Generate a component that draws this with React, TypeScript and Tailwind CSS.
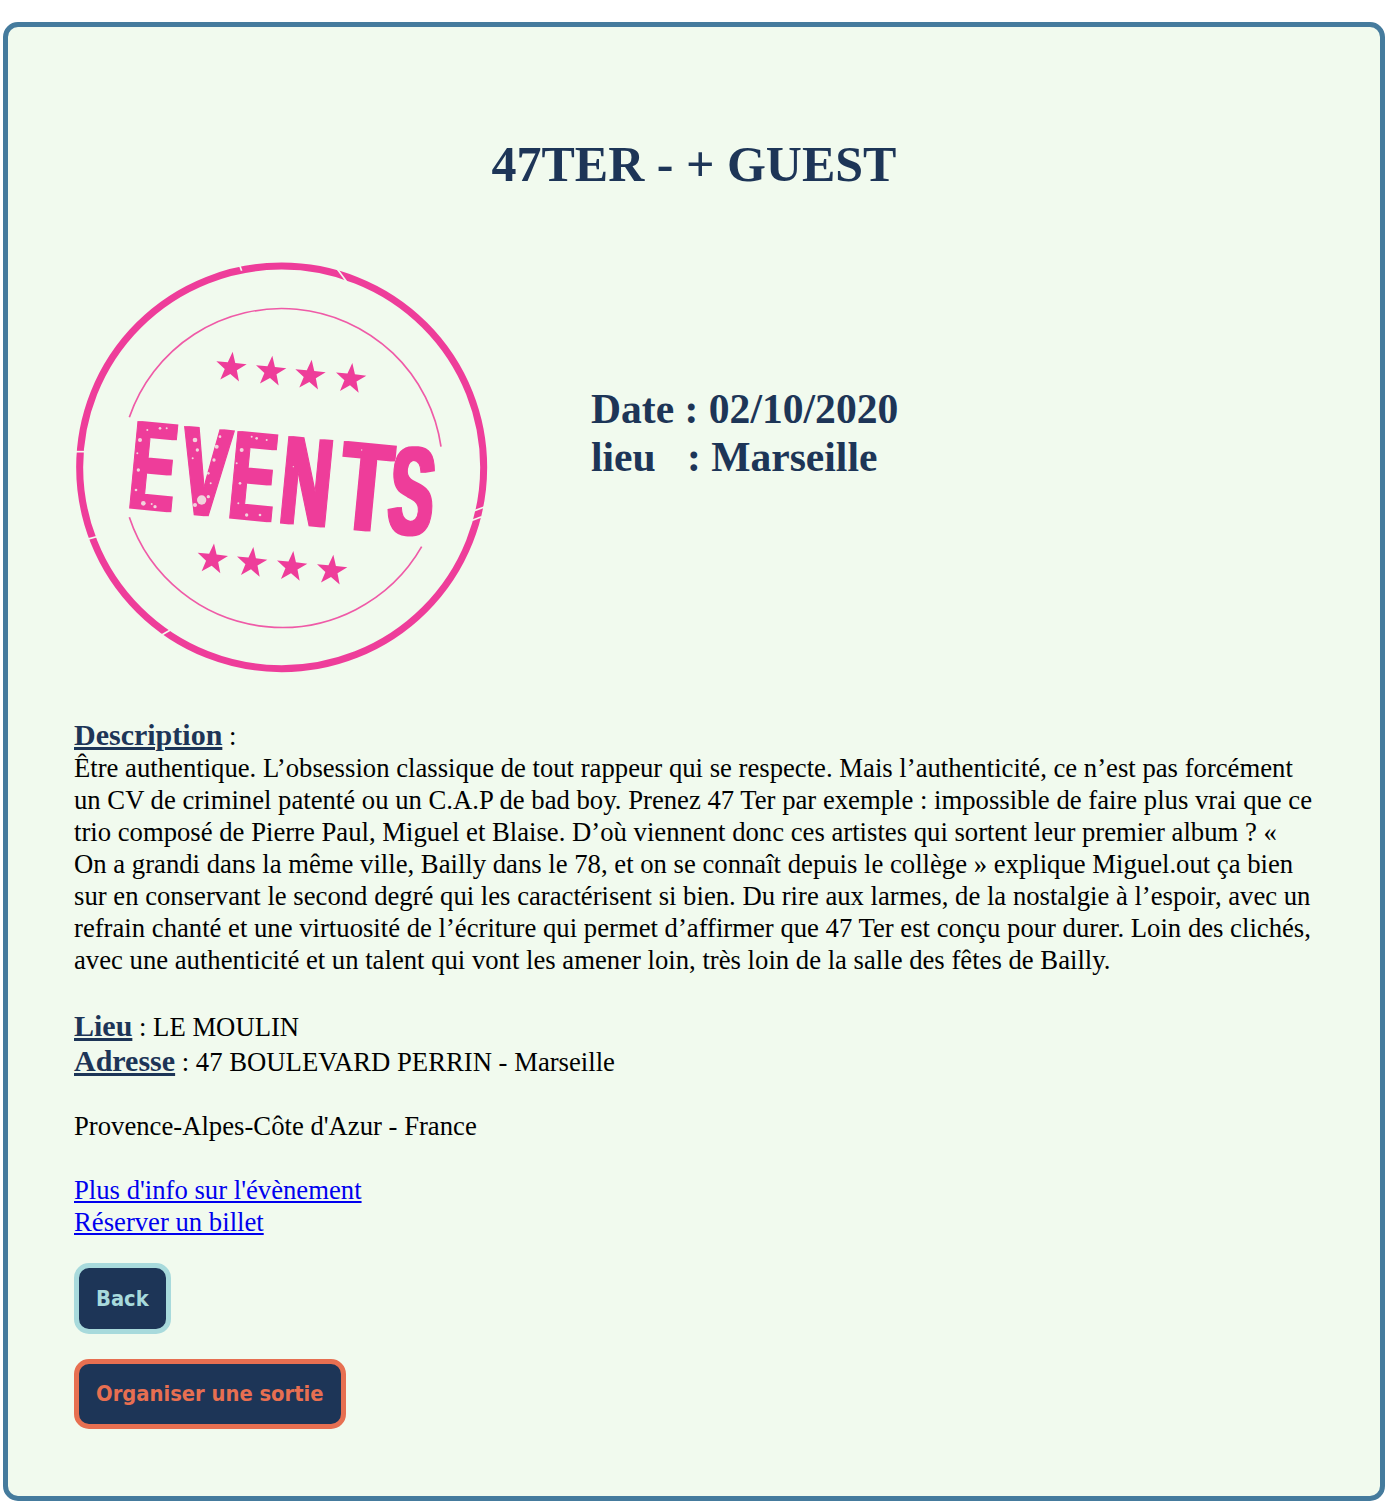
const PINK = "#ee3d9a";
const BG = "#f1faee";

function star(cx: number, cy: number, r: number, rot = 6) {
  const pts: string[] = [];
  for (let i = 0; i < 10; i++) {
    const rad = i % 2 === 0 ? r : r * 0.4;
    const a = ((-90 + rot + i * 36) * Math.PI) / 180;
    pts.push(`${(cx + rad * Math.cos(a)).toFixed(1)},${(cy + rad * Math.sin(a)).toFixed(1)}`);
  }
  return pts.join(" ");
}

const stars = [
  [513, 353], [632, 365], [750, 377], [872, 387],
  [457, 928], [575, 939], [695, 951], [815, 962],
];

const letters: [string, number, number, number][] = [
  ["E", 268, 778, 2.0],
  ["V", 424, 794, 2.1],
  ["E", 568, 808, 2.0],
  ["N", 728, 824, 2.05],
  ["T", 906, 840, 2.45],
  ["S", 1044, 852, 1.98],
];

const specks = [
  [240, 570, 6], [235, 660, 5], [250, 760, 7], [285, 770, 5], [300, 535, 4], [405, 570, 7], [412, 600, 5],
  [470, 590, 6], [462, 630, 5], [445, 670, 4], [425, 750, 14], [405, 765, 6], [445, 740, 5], [545, 600, 6],
  [540, 700, 4], [560, 795, 5], [590, 565, 4], [600, 795, 4], [530, 640, 3], [232, 610, 3], [262, 540, 3],
  [228, 720, 4], [275, 762, 3], [320, 535, 3], [398, 625, 3], [480, 560, 4], [452, 700, 3], [535, 760, 3],
  [575, 560, 3], [620, 570, 3], [700, 650, 2], [905, 600, 2],
];

const cuts = [
  [40, 605, 85, 605], [830, 55, 860, 95], [80, 868, 118, 858], [305, 1155, 340, 1135],
  [1235, 785, 1275, 770], [1225, 815, 1265, 800], [535, 35, 545, 62],
];

function Stamp() {
  return (
    <svg viewBox="42 18 1260 1272" className="w-[420px] h-[424px] shrink-0 blur-[0.4px]">
      <defs>
        <filter id="thick" x="-5%" y="-5%" width="110%" height="110%">
          <feMorphology operator="dilate" radius="7 0" />
        </filter>
      </defs>
      <ellipse cx="665" cy="652" rx="606" ry="604" fill="none" stroke={PINK} strokeWidth="21" />
      {cuts.map(([a, b, c, d], i) => (
        <line key={i} x1={a} y1={b} x2={c} y2={d} stroke={BG} strokeWidth="5" />
      ))}
      <path d="M208 502 A483 483 0 0 1 1143 590" fill="none" stroke={PINK} strokeWidth="5" opacity="0.85" />
      <path d="M208 802 A483 483 0 0 0 1085 890" fill="none" stroke={PINK} strokeWidth="5" opacity="0.85" />
      {stars.map(([x, y], i) => (
        <polygon key={i} points={star(x, y, 48)} fill={PINK} />
      ))}
      <g filter="url(#thick)">
        {letters.map(([ch, x, y, sx], i) => (
          <text
            key={i}
            transform={`translate(${x} ${y}) rotate(5.5) scale(${sx} 3.75)`}
            textAnchor="middle"
            fontFamily="Liberation Sans, sans-serif"
            fontWeight="700"
            fontSize="100"
            fill={PINK}
            stroke={PINK}
            strokeWidth="1.5"
          >
            {ch}
          </text>
        ))}
      </g>
      {specks.map(([x, y, r], i) => (
        <circle key={i} cx={x} cy={y} r={r} fill={BG} opacity="0.8" />
      ))}
    </svg>
  );
}

const label = "font-bold text-[30px] leading-[35px] text-[#1d3557] underline";
const btn = "block border-[5px] rounded-[15px] bg-[#1d3557] font-['DejaVu_Sans_Condensed','DejaVu_Sans',sans-serif] font-bold text-[21.75px] px-[17px]";

export default function App() {
  return (
    <div className="bg-white pt-[22px] pl-[3px] h-[1507px] font-['Liberation_Serif',serif] text-black text-[26.7px] leading-[32px]">
      <div className="border-[5px] border-[#457b9d] rounded-[15px] bg-[#f1faee] w-[1382px] h-[1479px] px-[66px]">
        <h1 className="text-center font-bold text-[50px] leading-[60px] text-[#1d3557] pt-[107px] pb-[62px]">
          47TER - + GUEST
        </h1>
        <div className="flex items-start gap-[97px]">
          <Stamp />
          <div className="font-bold text-[41.6px] leading-[48px] text-[#1d3557] pt-[129px]">
            Date : 02/10/2020
            <br />
            lieu&nbsp;&nbsp;&nbsp;: Marseille
          </div>
        </div>
        <p className="mt-[37px]">
          <span className={label}>Description</span> :
          <br />
          Être authentique. L’obsession classique de tout rappeur qui se respecte. Mais l’authenticité, ce n’est pas forcément un CV de criminel patenté ou un C.A.P de bad boy. Prenez 47 Ter par exemple : impossible de faire plus vrai que ce trio composé de Pierre Paul, Miguel et Blaise. D’où viennent donc ces artistes qui sortent leur premier album ? « On a grandi dans la même ville, Bailly dans le 78, et on se connaît depuis le collège » explique Miguel.out ça bien sur en conservant le second degré qui les caractérisent si bien. Du rire aux larmes, de la nostalgie à l’espoir, avec un refrain chanté et une virtuosité de l’écriture qui permet d’affirmer que 47 Ter est conçu pour durer. Loin des clichés, avec une authenticité et un talent qui vont les amener loin, très loin de la salle des fêtes de Bailly.
          <br />
          <br />
          <span className={label}>Lieu</span> : LE MOULIN
          <br />
          <span className={label}>Adresse</span> : 47 BOULEVARD PERRIN - Marseille
          <br />
          <br />
          Provence-Alpes-Côte d'Azur - France
          <br />
          <br />
          <a href="#" className="text-[#0000ee] underline">Plus d'info sur l'évènement</a>
          <br />
          <a href="#" className="text-[#0000ee] underline">Réserver un billet</a>
        </p>
        <button className={`${btn} mt-[25px] h-[71px] border-[#a8dadc] text-[#a8dadc]`}>Back</button>
        <button className={`${btn} mt-[25px] h-[70px] border-[#e76f51] text-[#e76f51]`}>Organiser une sortie</button>
      </div>
    </div>
  );
}
